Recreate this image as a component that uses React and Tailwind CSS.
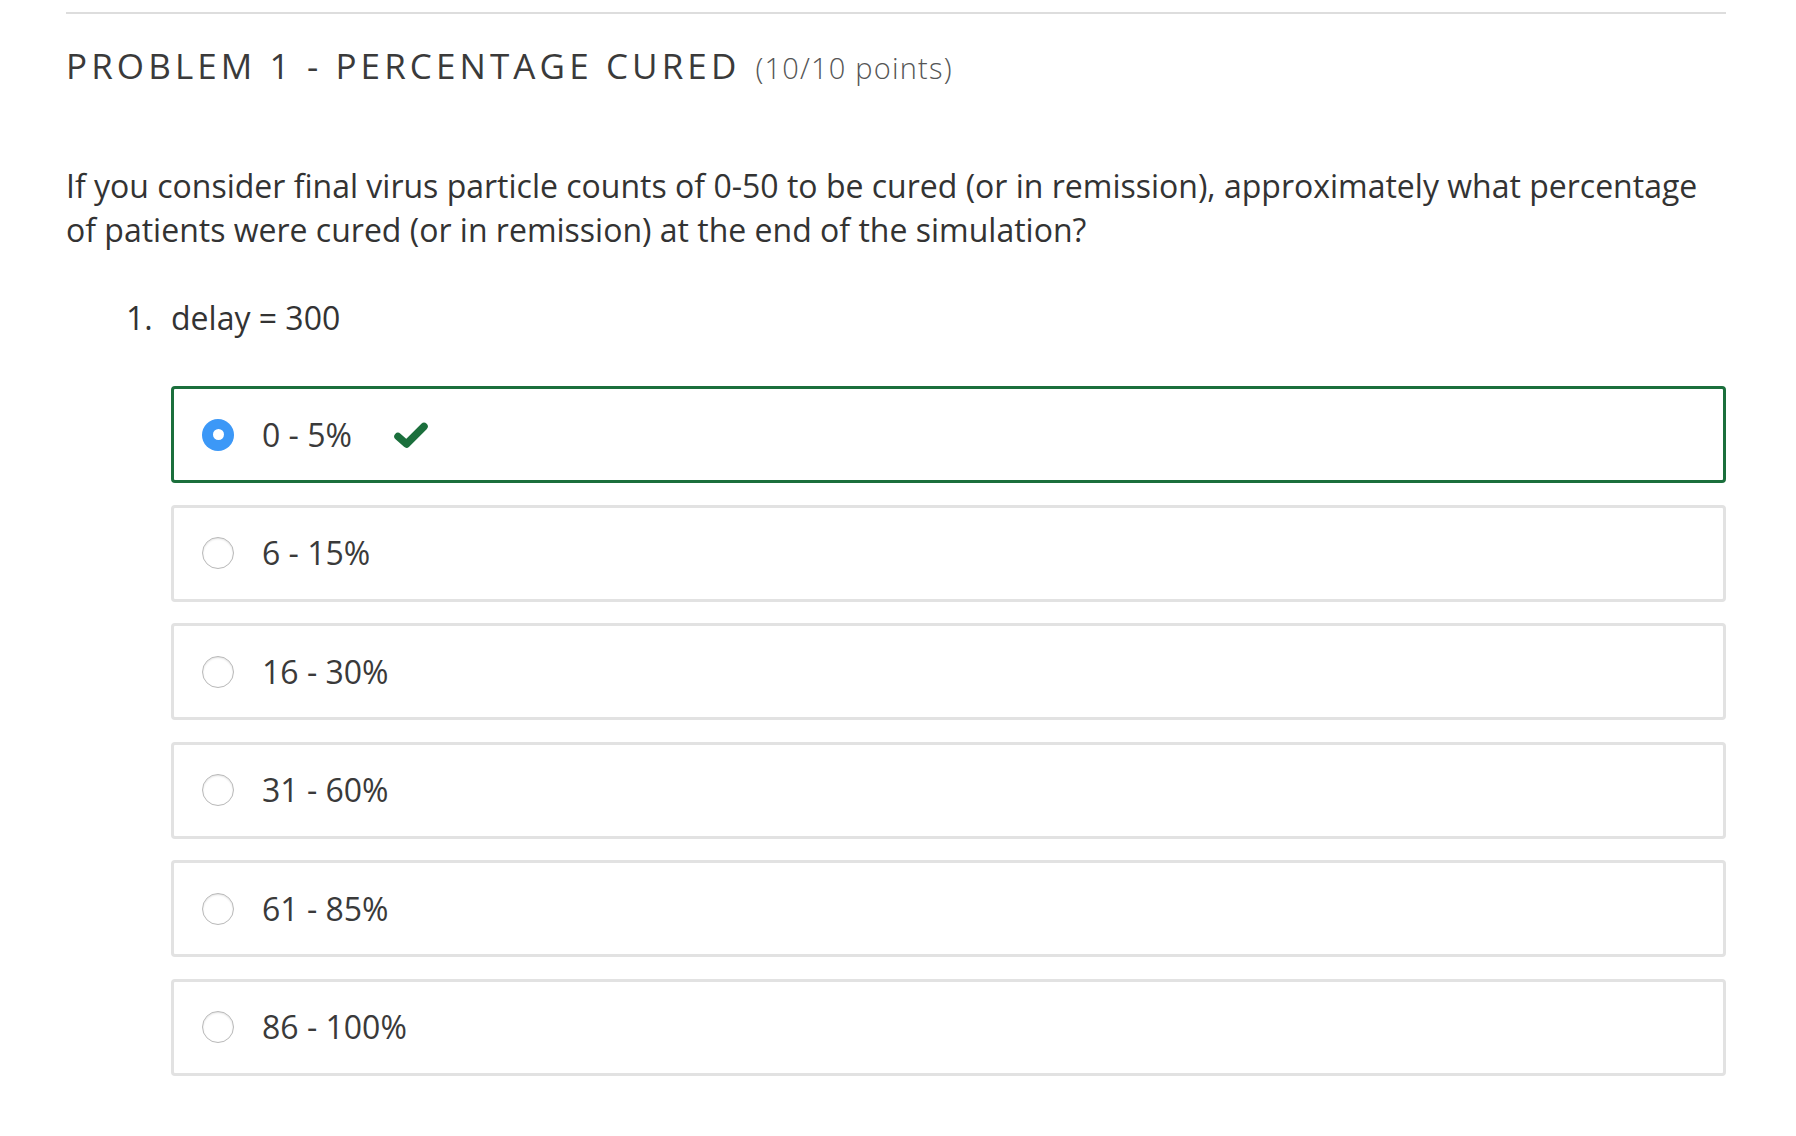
import React from 'react'

const options = ['0 - 5%', '6 - 15%', '16 - 30%', '31 - 60%', '61 - 85%', '86 - 100%']

const Check = () => (
  <svg width="34" height="26" viewBox="0 0 34 26" className="ml-[42px]">
    <path d="M4 14.5 L12.5 22 L30 4.5" fill="none" stroke="#1b6f3c" strokeWidth="7.5" strokeLinecap="round" strokeLinejoin="round" />
  </svg>
)

const Radio = ({ checked }) =>
  checked ? (
    <span className="flex h-[32px] w-[32px] shrink-0 items-center justify-center rounded-full bg-[#3c98f7]">
      <span className="h-[11px] w-[11px] rounded-full bg-white" />
    </span>
  ) : (
    <span className="h-[32px] w-[32px] shrink-0 rounded-full border border-[#b9b9b9] bg-white shadow-[inset_0_1px_2px_rgba(0,0,0,0.12)]" />
  )

export default function App() {
  return (
    <div className="min-h-[1136px] bg-white pt-[12px] pl-[66px] pr-[70px] text-[#333] [font-family:'Open_Sans',sans-serif]">
      {/* top rule */}
      <div className="border-t-2 border-[#dddddd]" />

      {/* heading */}
      <h2 className="mt-[30px] flex items-baseline leading-[44px]">
        <span className="text-[35px] font-normal uppercase tracking-[4.1px] text-[#3a3a3a]">Problem 1 - Percentage Cured</span>
        <span className="ml-[15px] text-[29px] font-light tracking-[1.2px] text-[#555]">(10/10 points)</span>
      </h2>

      {/* question */}
      <p className="mt-[74px] text-[32px] leading-[44px]">
        If you consider final virus particle counts of 0-50 to be cured (or in remission), approximately what percentage of patients were cured (or in remission) at the end of the simulation?
      </p>

      <div className="mt-[44px] flex pl-[60px]">
        <span className="w-[45px] shrink-0 text-[32px] leading-[44px]">1.</span>
        <div className="flex-1">
          <div className="text-[32px] leading-[44px]">delay = 300</div>

          <div className="mt-[46px] flex flex-col gap-[21.6px]">
            {options.map((o, i) => (
              <div
                key={o}
                className={`flex h-[97px] items-center rounded-[4px] border-[3px] pl-[28px] ${i === 0 ? 'border-[#1b6f3c]' : 'border-[#e2e2e2]'}`}
              >
                <Radio checked={i === 0} />
                <span className="ml-[28px] text-[32px] text-[#3a3a3a]">{o}</span>
                {i === 0 && <Check />}
              </div>
            ))}
          </div>
        </div>
      </div>
    </div>
  )
}
